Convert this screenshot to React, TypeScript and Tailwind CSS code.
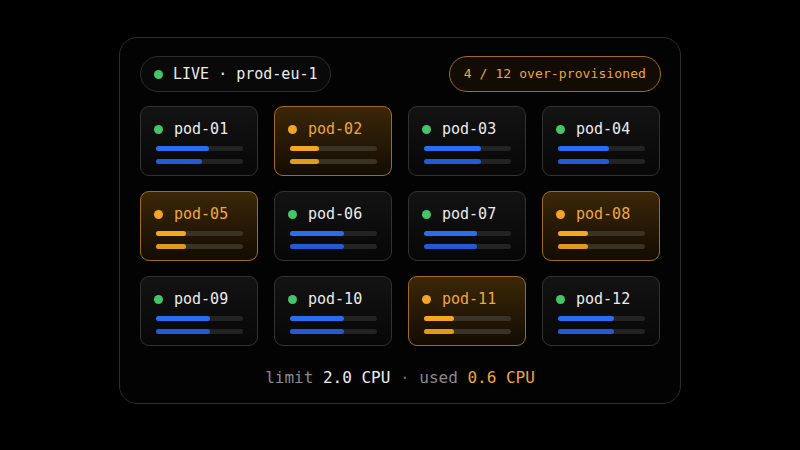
type Pod = { name: string; cpu: number; mem: number; over: boolean };

const pods: Pod[] = [
  { name: "pod-01", cpu: 61, mem: 53, over: false },
  { name: "pod-02", cpu: 33, mem: 33, over: true },
  { name: "pod-03", cpu: 65, mem: 65, over: false },
  { name: "pod-04", cpu: 59, mem: 59, over: false },
  { name: "pod-05", cpu: 34, mem: 34, over: true },
  { name: "pod-06", cpu: 62, mem: 62, over: false },
  { name: "pod-07", cpu: 61, mem: 61, over: false },
  { name: "pod-08", cpu: 34, mem: 34, over: true },
  { name: "pod-09", cpu: 62, mem: 62, over: false },
  { name: "pod-10", cpu: 62, mem: 62, over: false },
  { name: "pod-11", cpu: 34, mem: 34, over: true },
  { name: "pod-12", cpu: 64, mem: 64, over: false },
];

function Bar({ value, over, top }: { value: number; over: boolean; top: boolean }) {
  const fill = over
    ? top
      ? "bg-[#f5a81e]"
      : "bg-[#e09a1c]"
    : top
      ? "bg-[#2a6df0]"
      : "bg-[#2459d6]";
  return (
    <div className={`h-[5px] w-full rounded-full ${over ? "bg-[#3a3224]" : "bg-[#232323]"}`}>
      <div className={`h-full rounded-full ${fill}`} style={{ width: `${value}%` }} />
    </div>
  );
}

function PodCard({ pod }: { pod: Pod }) {
  return (
    <div
      className={`flex h-[70px] flex-col rounded-[9px] border px-[13px] pt-[13px] ${
        pod.over
          ? "border-[#a06b1f] bg-gradient-to-b from-[#3c2707] to-[#130c03]"
          : "border-[#323232] bg-gradient-to-b from-[#131313] to-[#070707]"
      }`}
    >
      <div className="flex h-[18px] items-center gap-[11px]">
        <span
          className={`h-[9px] w-[9px] rounded-full ${pod.over ? "bg-[#f2a524]" : "bg-[#46c46a]"}`}
        />
        <span
          className={`text-[15px] leading-none ${pod.over ? "text-[#f0a73a]" : "text-[#ececec]"}`}
        >
          {pod.name}
        </span>
      </div>
      <div className="mt-[8px] flex flex-col gap-[8px] pl-[2px] pr-[1px]">
        <Bar value={pod.cpu} over={pod.over} top />
        <Bar value={pod.mem} over={pod.over} top={false} />
      </div>
    </div>
  );
}

export default function App() {
  const overCount = pods.filter((p) => p.over).length;

  return (
    <div
      className="flex h-[450px] w-[800px] justify-center bg-black pt-[37px]"
      style={{ fontFamily: '"DejaVu Sans Mono", "Liberation Mono", monospace' }}
    >
      <div className="flex h-[367px] w-[562px] flex-col rounded-[18px] border border-[#2e2e2e] bg-[#030303] px-[20px] pt-[18px]">
        <div className="flex h-[36px] items-center justify-between">
          <div className="flex h-full items-center gap-[10px] rounded-full border border-[#2c2c2c] bg-[#090909] pl-[13px] pr-[12px]">
            <span className="h-[9px] w-[9px] rounded-full bg-[#46c46a]" />
            <span className="text-[15px] text-[#ececec]">LIVE · prod-eu-1</span>
          </div>
          <div className="-mr-[1px] flex h-full items-center rounded-full border border-[#a06b1f] bg-[#120c04] px-[14px] text-[13px] tracking-[0.1px] text-[#eda63a]">
            {overCount} / {pods.length} over-provisioned
          </div>
        </div>

        <div className="mt-[14px] grid grid-cols-4 gap-x-[16px] gap-y-[15px]">
          {pods.map((pod) => (
            <PodCard key={pod.name} pod={pod} />
          ))}
        </div>

        <div className="mt-[20px] text-center text-[16px]">
          <span className="text-[#8a8a8a]">limit </span>
          <span className="text-[#ededed]">2.0 CPU</span>
          <span className="text-[#6a6a6a]"> · </span>
          <span className="text-[#8a8a8a]">used </span>
          <span className="text-[#eda63a]">0.6 CPU</span>
        </div>
      </div>
    </div>
  );
}
